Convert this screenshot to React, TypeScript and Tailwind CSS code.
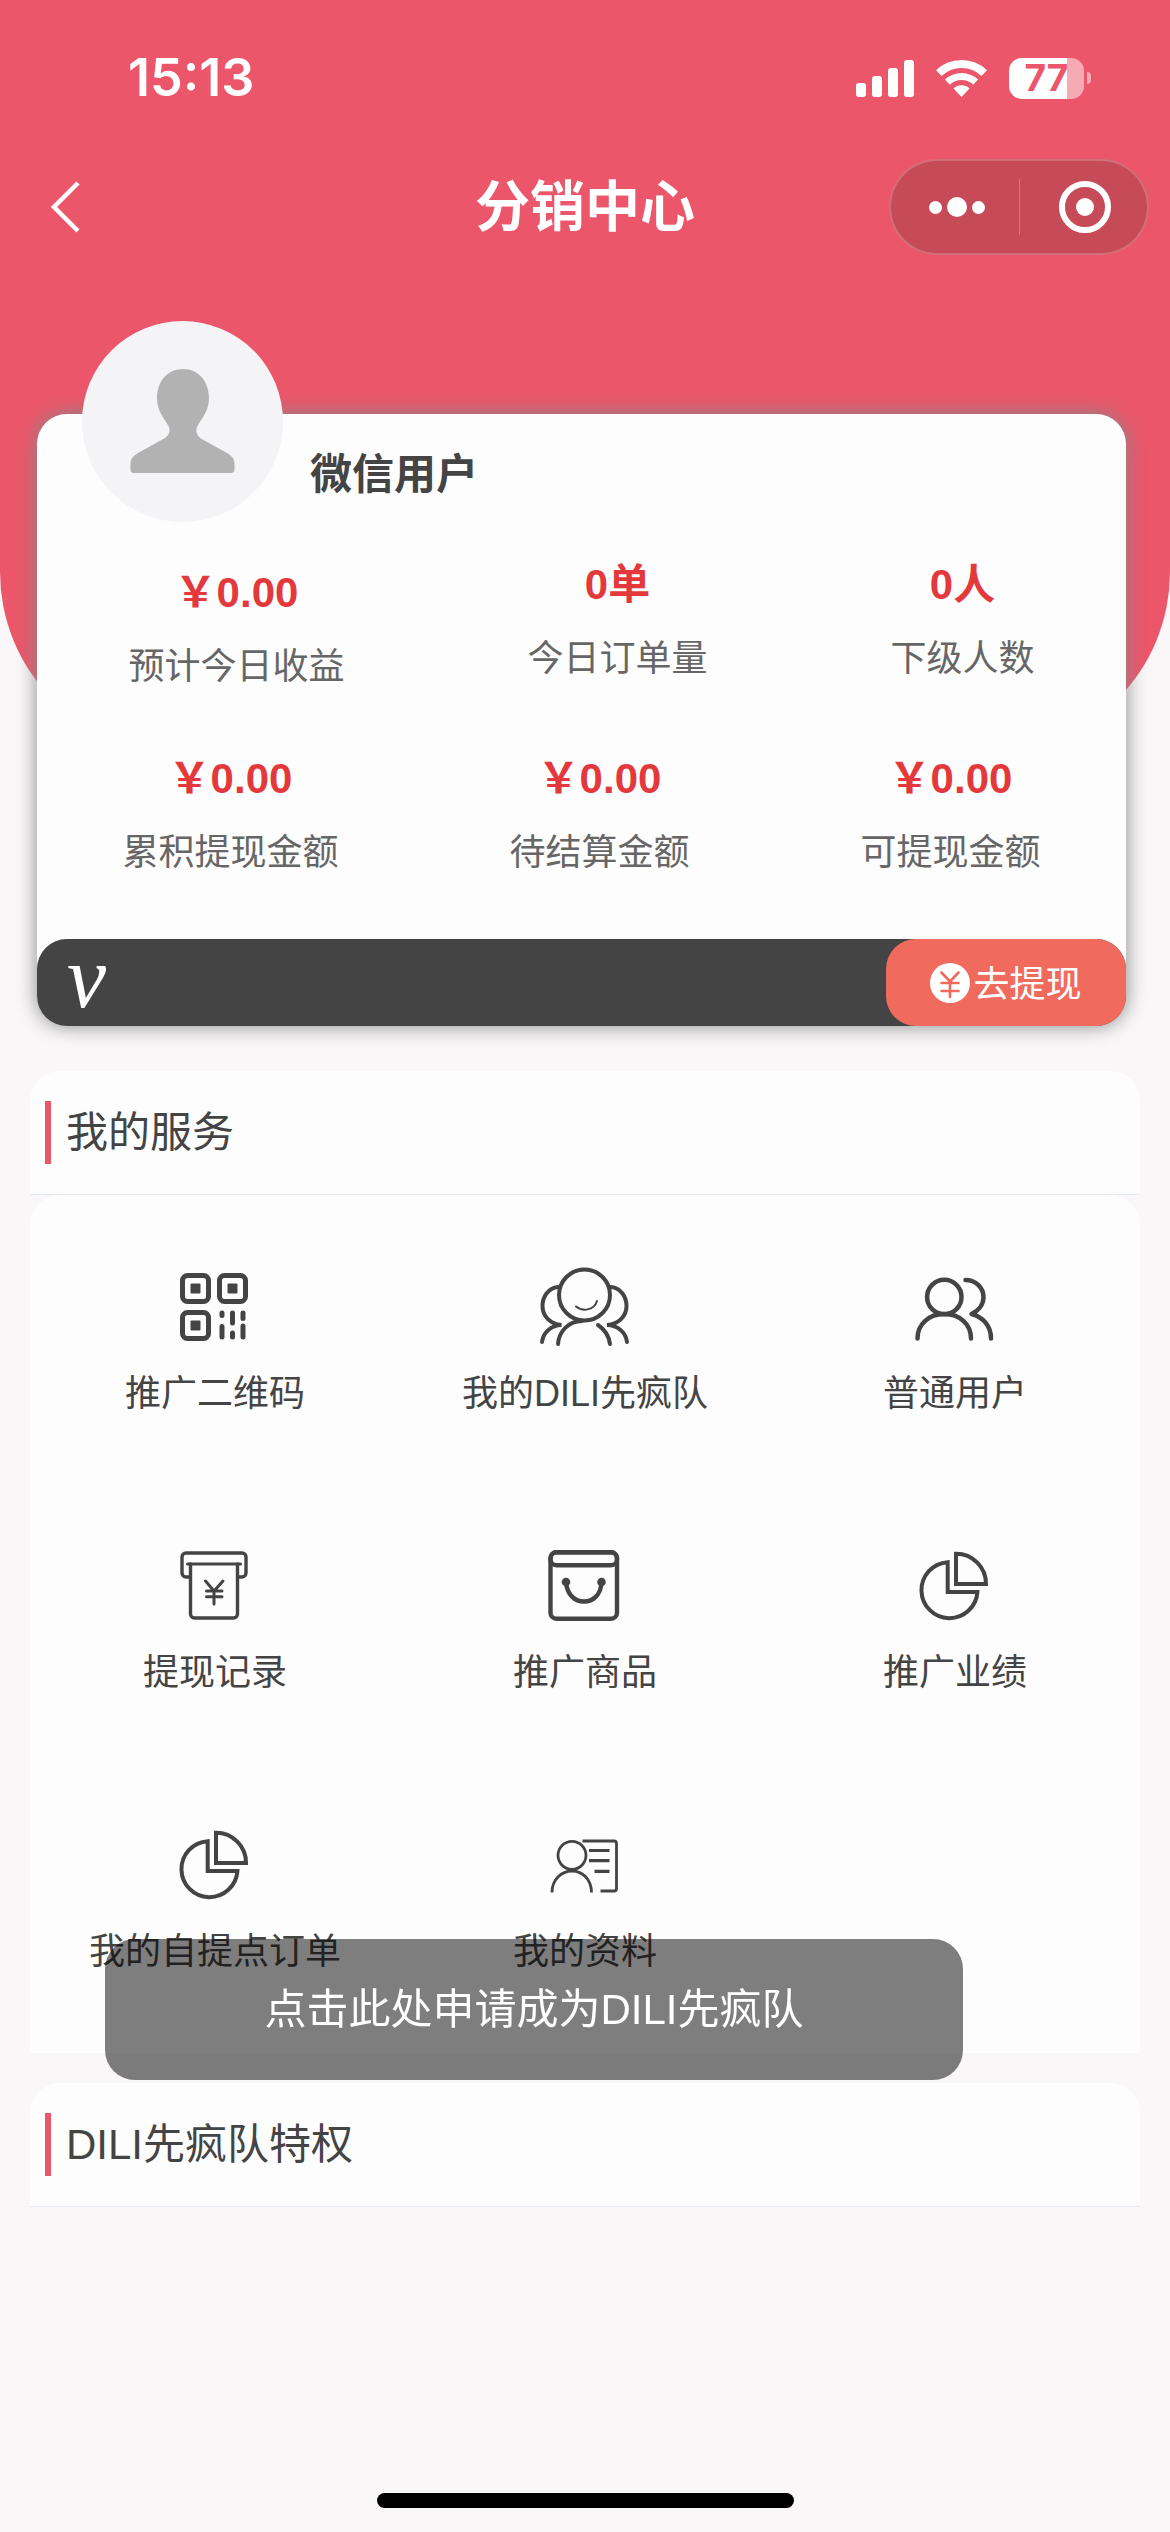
import type { ReactNode } from "react";

type Stat = { value: string; label: string; money?: boolean };

const todayStats: Stat[] = [
  { value: "￥0.00", label: "预计今日收益", money: true },
  { value: "0单", label: "今日订单量" },
  { value: "0人", label: "下级人数" },
];

const moneyStats: Stat[] = [
  { value: "￥0.00", label: "累积提现金额", money: true },
  { value: "￥0.00", label: "待结算金额", money: true },
  { value: "￥0.00", label: "可提现金额", money: true },
];

const pie = (
  <g strokeWidth="4">
    <path d="M40.7 24.2V54H70.4A28 28 0 1 1 40.7 24.2Z" />
    <path d="M49 15.7V46H79A30 30 0 0 0 49 15.7Z" />
  </g>
);

const services: { label: string; icon: ReactNode }[] = [
  {
    label: "推广二维码",
    icon: (
      <g strokeWidth="5" strokeLinecap="round">
        <rect x="15.5" y="16.5" width="26" height="26" rx="5" />
        <rect x="52.5" y="16.5" width="26" height="26" rx="5" />
        <rect x="15.5" y="53.5" width="26" height="26" rx="5" />
        <g fill="currentColor" stroke="none">
          <rect x="23.5" y="24.5" width="10" height="10" rx="1" />
          <rect x="60.5" y="24.5" width="10" height="10" rx="1" />
          <rect x="23.5" y="61.5" width="10" height="10" rx="1" />
        </g>
        <path d="M55 54V56.5M55 67.5V78M65.5 54V64M65.5 74V78M76 54V59.5M76 67V78" />
      </g>
    ),
  },
  {
    label: "我的DILI先疯队",
    icon: (
      <g strokeWidth="4" strokeLinecap="round">
        <circle cx="47.5" cy="36" r="25.5" />
        <path strokeWidth="2" d="M39 47.5C45 52.5 57 52 60 42" />
        <path d="M21 28C11 29 5.5 38 5.5 47C5.5 57 13 65 24.5 66C14 66 6 74 5 83" />
        <path d="M74 28C84 29 89.5 38 89.5 47C89.5 57 82 65 70 66C81 66 89 74 90 83" />
        <path d="M45 62C32 62 22 72 21 85M61 66C67 70 72 77 73 85" />
      </g>
    ),
  },
  {
    label: "普通用户",
    icon: (
      <g strokeWidth="4.5" strokeLinecap="round" strokeLinejoin="round">
        <circle cx="37.3" cy="38" r="17.2" />
        <path d="M10.5 79.5C10.5 65 22 55 37.3 55S64 65 64 79.5" />
        <path d="M58.5 21C69 21 76.5 29 76.5 38C76.5 46 71 52 64.5 55C76 58 84 67 84 79.5" />
      </g>
    ),
  },
  {
    label: "提现记录",
    icon: (
      <g strokeWidth="3.4" strokeLinecap="round" strokeLinejoin="round">
        <path d="M22 39H19a4 4 0 0 1-4-4V19a4 4 0 0 1 4-4H75a4 4 0 0 1 4 4V35a4 4 0 0 1-4 4H72" />
        <path strokeWidth="3" d="M20.5 26H73.5" />
        <path d="M23.5 26V76a4 4 0 0 0 4 4H66.5a4 4 0 0 0 4-4V26" />
        <path strokeWidth="3" d="M38.5 43L47 53L56 43M39.5 53H55M39.5 58.7H55M47 53V66" />
      </g>
    ),
  },
  {
    label: "推广商品",
    icon: (
      <g strokeWidth="4.4" strokeLinecap="round">
        <rect x="13.5" y="14.3" width="66.5" height="66.5" rx="6" />
        <rect x="13.5" y="14.3" width="66.5" height="13" rx="6" />
        <path d="M29 44C30 57 38 63.5 47 63.5S64 57 64.5 44" />
        <circle cx="29" cy="44" r="4.3" fill="currentColor" stroke="none" />
        <circle cx="64.5" cy="44" r="4.3" fill="currentColor" stroke="none" />
      </g>
    ),
  },
  { label: "推广业绩", icon: pie },
  { label: "我的自提点订单", icon: pie },
  {
    label: "我的资料",
    icon: (
      <g strokeWidth="2.8">
        <circle cx="35" cy="38.3" r="14" />
        <path d="M15 75.5C15 63 24 54 35 54S54.5 63 54.5 75.5" />
        <path d="M45.5 24H77a2.5 2.5 0 0 1 2.5 2.5V71.5a2.5 2.5 0 0 1-2.5 2.5H63.5" />
        <path strokeWidth="3.2" d="M52 33.5H72.5M52 43.7H72.5M57.5 54.3H72.5" />
      </g>
    ),
  },
];

function StatusBar() {
  return (
    <div className="flex h-[156px] items-center justify-between pl-32 pr-[79px] text-white">
      <span className="font-[Inter] text-[52px] leading-none font-semibold">15:13</span>
      <div className="flex items-center">
        <svg className="h-[37px] w-[58px]" viewBox="0 0 58 37" fill="currentColor">
          <rect x="0" y="23" width="10" height="14" rx="3" />
          <rect x="16" y="16" width="10" height="21" rx="3" />
          <rect x="32" y="8" width="10" height="29" rx="3" />
          <rect x="48" y="0" width="10" height="37" rx="3" />
        </svg>
        <svg className="ml-[22px] h-[37px] w-[51px]" viewBox="0 0 51 37" fill="none" stroke="currentColor">
          <path strokeWidth="8" d="M2.8 13.1A33 33 0 0 1 48.2 13.1" />
          <path strokeWidth="7" d="M11.4 22.1A20.5 20.5 0 0 1 39.6 22.1" />
          <path fill="currentColor" stroke="none" d="M25.5 37L17.5 28.5A11.7 11.7 0 0 1 33.5 28.5Z" />
        </svg>
        <div className="ml-[22px] flex h-[41px] w-[75px] items-center justify-center rounded-[13px] bg-[linear-gradient(90deg,#fff_58px,#f5aab4_58px)] font-[Inter] text-[37px] font-bold text-[#eb566a]">
          77
        </div>
        <div className="ml-[3px] h-[12px] w-[4px] rounded-r-full bg-[#f5aab4]" />
      </div>
    </div>
  );
}

function NavBar() {
  return (
    <div className="grid h-[102px] grid-cols-[1fr_auto_1fr] items-center px-[21px] text-white">
      <button aria-label="返回" className="ml-[26px] w-9">
        <svg className="h-[54px] w-9" viewBox="0 0 36 54" fill="none" stroke="currentColor" strokeWidth="4.5">
          <path d="M31 3L7 27L31 51" />
        </svg>
      </button>
      <h1 className="text-[55px] leading-none font-semibold">分销中心</h1>
      <div className="flex h-[96px] w-[260px] items-center justify-self-end rounded-full border-2 border-white/20 bg-[#c74a59]">
        <button aria-label="更多" className="flex flex-1 items-center justify-center gap-[5px] pl-1">
          <span className="size-[13px] rounded-full bg-white" />
          <span className="size-5 rounded-full bg-white" />
          <span className="size-[13px] rounded-full bg-white" />
        </button>
        <span className="h-14 w-px bg-white/25" />
        <button aria-label="关闭" className="flex flex-1 justify-center pl-1">
          <span className="flex size-[52px] items-center justify-center rounded-full border-6 border-white">
            <span className="size-[18px] rounded-full bg-white" />
          </span>
        </button>
      </div>
    </div>
  );
}

function StatRow({ items }: { items: Stat[] }) {
  return (
    <dl className="flex items-start justify-around text-center">
      {items.map((item) => (
        <div
          key={item.label}
          data-money={item.money}
          className="flex flex-col-reverse gap-6 leading-[50px] data-[money=true]:pt-2"
        >
          <dt className="text-4xl leading-[50px] text-[#666]">{item.label}</dt>
          <dd className="text-[42px] font-bold text-[#e4393c]">{item.value}</dd>
        </div>
      ))}
    </dl>
  );
}

function UserCard() {
  return (
    <section className="relative -mt-[338px] ml-[37px] mr-[44px] rounded-[30px] bg-[#fdfdfd] shadow-[0_0_20px_#888]">
      <svg className="absolute -top-[93px] left-[45px] size-[201px] rounded-full bg-[#f4f4f6]" viewBox="0 0 201 201">
        <path
          fill="#b2b2b2"
          d="M101 48C117 48 127 61 127 77C127 90 120 97 115.5 105C113 110 115 114 118 117L145 132C150 135 152.5 138 152.5 143V149Q152.5 152 149 152H52Q48.5 152 48.5 149V143C48.5 138 51 135 56 132L83 117C87 114 89 110 86.5 105C82 97 75 90 75 77C75 61 85 48 101 48Z"
        />
      </svg>
      <h2 className="pt-9 pl-[273px] text-[42px] leading-[50px] font-semibold text-[#444]">微信用户</h2>
      <div className="flex flex-col gap-[54px] pt-[60px] pb-[61px]">
        <StatRow items={todayStats} />
        <StatRow items={moneyStats} />
      </div>
      <div className="flex h-[87px] items-center justify-between rounded-[30px] bg-[#444] text-white">
        <span className="self-start pl-[30px] font-['Liberation_Serif',serif] text-[88px] leading-[78px] italic">v</span>
        <button className="flex h-full w-[240px] items-center justify-center gap-[3px] rounded-[30px] bg-[#f06b5e] text-4xl">
          <svg className="size-10" viewBox="0 0 40 40" fill="none">
            <circle cx="20" cy="20" r="20" fill="#fff" />
            <path
              stroke="#f06b5e"
              strokeWidth="2.6"
              strokeLinecap="round"
              d="M11.5 9.5L20 18.5L28.5 9.5M11.5 20H28.5M11.5 28H28.5M20 18.5V34"
            />
          </svg>
          <span className="pt-1">去提现</span>
        </button>
      </div>
    </section>
  );
}

function SectionTitle({ children }: { children: ReactNode }) {
  return (
    <div className="flex h-[124px] items-center rounded-t-[30px] border-b border-[#e4e9f2] bg-[#fdfdfd] pl-[15px]">
      <h2 className="border-l-6 border-[#eb566a] pl-[15px] text-[42px] leading-[63px] text-[#444]">{children}</h2>
    </div>
  );
}

function ServiceGrid() {
  return (
    <nav className="grid auto-rows-[279px] grid-cols-3 rounded-t-[30px] bg-[#fdfdfd] pb-[21px]">
      {services.map((item) => (
        <button key={item.label} className="flex flex-col items-center gap-[14px] pt-16 text-4xl text-[#444]">
          <svg className="size-24" viewBox="0 0 96 96" fill="none" stroke="currentColor">
            {item.icon}
          </svg>
          <span className="leading-[50px]">{item.label}</span>
        </button>
      ))}
    </nav>
  );
}

export default function App() {
  return (
    <div className="min-h-screen bg-[#f9f7f8] font-['Liberation_Sans','Noto_Sans_CJK_SC',sans-serif]">
      <header className="h-[752px] rounded-b-[180px] bg-[#eb566a]">
        <StatusBar />
        <NavBar />
      </header>

      <UserCard />

      <main className="mx-[30px] mt-[45px] flex flex-col gap-[30px]">
        <section>
          <SectionTitle>我的服务</SectionTitle>
          <ServiceGrid />
        </section>
        <section>
          <SectionTitle>DILI先疯队特权</SectionTitle>
        </section>
      </main>

      <button className="fixed right-[207px] bottom-[452px] left-[105px] h-[141px] rounded-[30px] bg-black/50 text-[42px] text-white">
        点击此处申请成为DILI先疯队
      </button>

      <div className="fixed inset-x-0 bottom-6 mx-auto h-[15px] w-[417px] rounded-full bg-black" />
    </div>
  );
}
